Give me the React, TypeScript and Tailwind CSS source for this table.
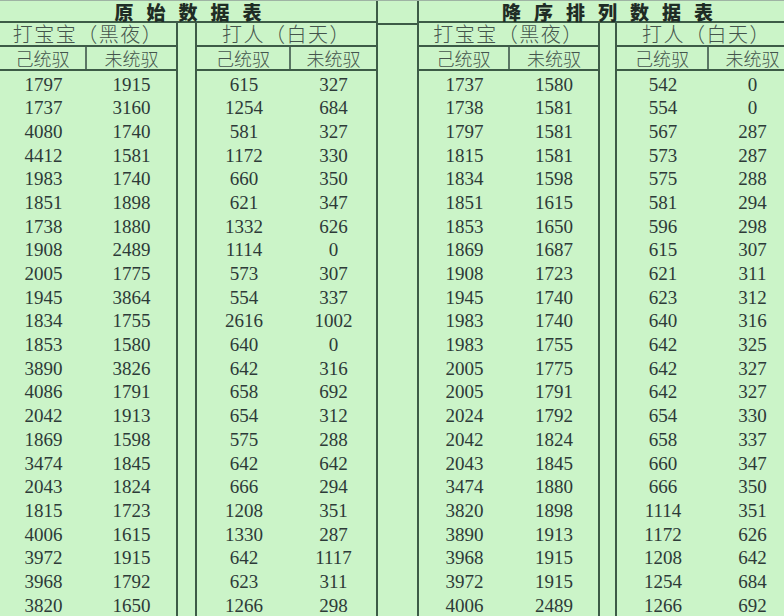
import React from "react";

type Row = [number, number];

const leftA: Row[] = [
  [1797, 1915], [1737, 3160], [4080, 1740], [4412, 1581], [1983, 1740], [1851, 1898],
  [1738, 1880], [1908, 2489], [2005, 1775], [1945, 3864], [1834, 1755], [1853, 1580],
  [3890, 3826], [4086, 1791], [2042, 1913], [1869, 1598], [3474, 1845], [2043, 1824],
  [1815, 1723], [4006, 1615], [3972, 1915], [3968, 1792], [3820, 1650],
];
const leftB: Row[] = [
  [615, 327], [1254, 684], [581, 327], [1172, 330], [660, 350], [621, 347],
  [1332, 626], [1114, 0], [573, 307], [554, 337], [2616, 1002], [640, 0],
  [642, 316], [658, 692], [654, 312], [575, 288], [642, 642], [666, 294],
  [1208, 351], [1330, 287], [642, 1117], [623, 311], [1266, 298],
];
const rightA: Row[] = [
  [1737, 1580], [1738, 1581], [1797, 1581], [1815, 1581], [1834, 1598], [1851, 1615],
  [1853, 1650], [1869, 1687], [1908, 1723], [1945, 1740], [1983, 1740], [1983, 1755],
  [2005, 1775], [2005, 1791], [2024, 1792], [2042, 1824], [2043, 1845], [3474, 1880],
  [3820, 1898], [3890, 1913], [3968, 1915], [3972, 1915], [4006, 2489],
];
const rightB: Row[] = [
  [542, 0], [554, 0], [567, 287], [573, 287], [575, 288], [581, 294],
  [596, 298], [615, 307], [621, 311], [623, 312], [640, 316], [642, 325],
  [642, 327], [642, 327], [654, 330], [658, 337], [660, 347], [666, 350],
  [1114, 351], [1172, 626], [1208, 642], [1254, 684], [1266, 692],
];

const cjk = { fontFamily: '"Noto Sans CJK SC", "Noto Sans", sans-serif' };
const num = { fontFamily: '"Liberation Serif", "DejaVu Serif", serif' };

function Group({
  title,
  width,
  divider,
  rows,
}: {
  title: string;
  width: string;
  divider: string;
  rows: Row[];
}) {
  return (
    <div className={`${width} shrink-0 flex flex-col`}>
      <div
        className="h-[24px] border-b-2 border-[#3d5b47] flex items-center justify-center text-[20px] font-light tracking-[1.5px] text-[#44544c] leading-none"
        style={cjk}
      >
        {title}
      </div>
      <div
        className="h-[24px] border-b-2 border-[#3d5b47] flex text-[18px] font-light text-[#44544c] leading-none"
        style={cjk}
      >
        <div className={`${divider} shrink-0 border-r-2 border-[#5b7665] flex items-center justify-center`}>
          己统驭
        </div>
        <div className="flex-1 flex items-center justify-center">未统驭</div>
      </div>
      {rows.map((r, i) => (
        <div
          key={i}
          className="h-[23.7px] flex text-[19px] text-[#2d3a38] pt-[2px] leading-none"
          style={num}
        >
          <div className={`${divider} shrink-0 flex items-center justify-center`}>{r[0]}</div>
          <div className="flex-1 flex items-center justify-center">{r[1]}</div>
        </div>
      ))}
    </div>
  );
}

function Table({
  title,
  width,
  children,
}: {
  title: string;
  width: string;
  children: React.ReactNode;
}) {
  return (
    <div className={`${width} shrink-0 flex flex-col`}>
      <div
        className="h-[24px] border-b-2 border-[#3d5b47] flex items-center justify-center text-[19px] font-black tracking-[13px] pl-[13px] text-[#1f2c25] leading-none"
        style={cjk}
      >
        {title}
      </div>
      <div className="flex flex-1">{children}</div>
    </div>
  );
}

export default function App() {
  return (
    <div className="w-[784px] h-[616px] overflow-hidden bg-[#cbf4c8] border-t border-[#9fb3a4]">
      <div className="flex h-full">
        <Table title="原始数据表" width="w-[376px]">
          <Group title="打宝宝（黑夜）" width="w-[176px]" divider="w-[87px]" rows={leftA} />
          <div className="w-[21px] shrink-0 border-x-2 border-[#3d5b47]" />
          <Group title="打人（白天）" width="w-[179px]" divider="w-[94px]" rows={leftB} />
        </Table>
        <div className="w-[43px] shrink-0 border-x-2 border-[#3d5b47] flex flex-col">
          <div className="h-[24px] border-b-2 border-[#3d5b47]" />
        </div>
        <Table title="降序排列数据表" width="w-[377px]">
          <Group title="打宝宝（黑夜）" width="w-[179px]" divider="w-[91px]" rows={rightA} />
          <div className="w-[19px] shrink-0 border-x-2 border-[#3d5b47]" />
          <Group title="打人（白天）" width="w-[179px]" divider="w-[92px]" rows={rightB} />
        </Table>
      </div>
    </div>
  );
}
